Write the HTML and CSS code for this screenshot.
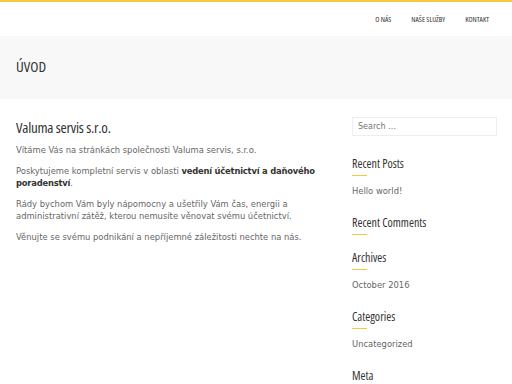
FILE: index.html
```html
<!DOCTYPE html>
<html lang="cs">
<head>
  <meta charset="UTF-8" />
  <meta name="viewport" content="width=device-width, initial-scale=1.0"/>
  <title>Valuma servis s.r.o.</title>
  <link rel="stylesheet" href="styles.css">
</head>
<body>
  <header class="site-header">
    <nav class="main-nav">
      <a href="#">O nás</a>
      <a href="#">Naše služby</a>
      <a href="#">Kontakt</a>
    </nav>
  </header>

  <div class="page-title">
    <h1>Úvod</h1>
  </div>

  <div class="content">
    <main class="entry">
      <h2>Valuma servis s.r.o.</h2>
      <p>Vítáme Vás na stránkách společnosti Valuma servis, s.r.o.</p>
      <p>Poskytujeme kompletní servis v oblasti <strong>vedení účetnictví a daňového poradenství</strong>.</p>
      <p>Rády bychom Vám byly nápomocny a ušetřily Vám čas, energii a administrativní zátěž, kterou nemusíte věnovat svému účetnictví.</p>
      <p>Věnujte se svému podnikání a nepříjemné záležitosti nechte na nás.</p>
    </main>

    <aside class="sidebar">
      <input class="search" type="search" placeholder="Search …" />

      <section class="widget">
        <h3>Recent Posts</h3>
        <ul>
          <li><a href="#">Hello world!</a></li>
        </ul>
      </section>
      <section class="widget">
        <h3>Recent Comments</h3>
      </section>
      <section class="widget">
        <h3>Archives</h3>
        <ul>
          <li><a href="#">October 2016</a></li>
        </ul>
      </section>
      <section class="widget">
        <h3>Categories</h3>
        <ul>
          <li><a href="#">Uncategorized</a></li>
        </ul>
      </section>
      <section class="widget">
        <h3>Meta</h3>
      </section>
    </aside>
  </div>
</body>
</html>
```

FILE: styles.css
```css
body {
  margin: 0;
  font-family: "DejaVu Sans", sans-serif;
  font-size: 8.4px;
  color: #666;
  background: #fff;
}
a {
  color: inherit;
  text-decoration: none;
}
.site-header {
  border-top: 2px solid #f2c840;
  height: 34px;
  display: flex;
  justify-content: flex-end;
  align-items: center;
}
.main-nav {
  display: flex;
  gap: 20px;
  padding-right: 23px;
}
.main-nav a {
  font-family: "Open Sans", sans-serif;
  font-stretch: 75%;
  font-weight: 500;
  font-size: 7.5px;
  text-transform: uppercase;
  color: #333;
}
.page-title {
  background: #f8f8f8;
  height: 63px;
  box-sizing: border-box;
  padding: 0 0 3px 16px;
  display: flex;
  align-items: center;
}
.page-title h1 {
  margin: 0;
  font-family: "Open Sans", sans-serif;
  font-stretch: 75%;
  font-weight: 500;
  font-size: 15px;
  text-transform: uppercase;
  color: #333;
}
.content {
  display: flex;
  justify-content: space-between;
  padding: 18px 15px 0 16px;
}
.entry {
  width: 306px;
}
.entry h2 {
  margin: 0 0 7px;
  font-family: "Open Sans", sans-serif;
  font-stretch: 75%;
  font-weight: 500;
  font-size: 15px;
  letter-spacing: -0.25px;
  line-height: 20px;
  color: #333;
}
.entry p {
  margin: 0 0 9px;
  line-height: 12px;
}
.entry strong {
  color: #333;
  letter-spacing: -0.2px;
}
.sidebar {
  width: 145px;
  display: flex;
  flex-direction: column;
}
.search {
  height: 19px;
  box-sizing: border-box;
  border: 1px solid #eee;
  padding: 0 5px;
  font-family: "DejaVu Sans", sans-serif;
  font-size: 8px;
  color: #999;
  margin: 0 0 20px;
}
.widget {
  margin-bottom: 15px;
}
.widget h3 {
  margin: 0;
  font-family: "Open Sans", sans-serif;
  font-stretch: 75%;
  font-weight: 500;
  font-size: 12px;
  line-height: 16px;
  color: #333;
  position: relative;
  padding-bottom: 4px;
}
.widget h3::after {
  content: "";
  position: absolute;
  left: 0;
  bottom: 0;
  width: 15px;
  height: 1px;
  background: #f2c840;
}
.widget ul {
  list-style: none;
  margin: 6px 0 0;
  padding: 0;
}
.widget li {
  line-height: 18px;
}
```
